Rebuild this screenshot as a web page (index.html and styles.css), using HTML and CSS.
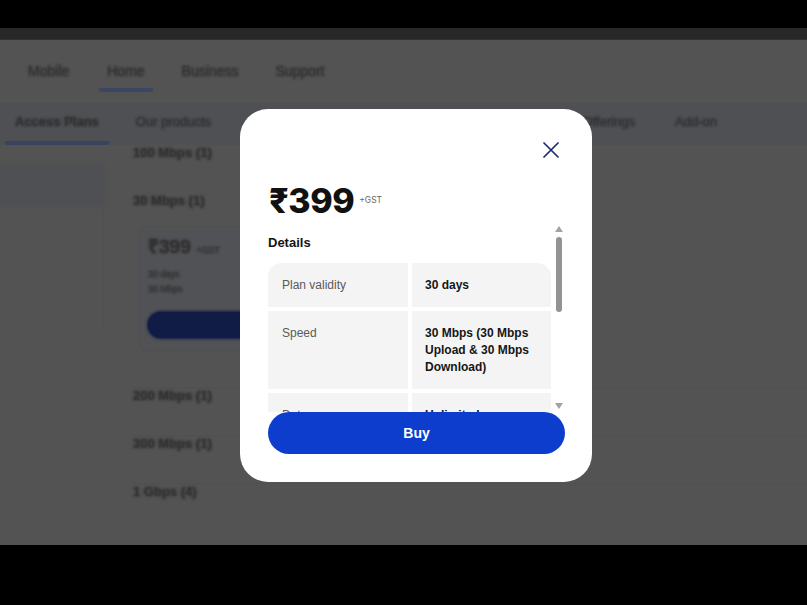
FILE: index.html
```html
<!DOCTYPE html>
<html lang="en">
<head>
<meta charset="utf-8">
<title>Plan details</title>
<link rel="stylesheet" href="styles.css">
</head>
<body>
<div class="device">
  <div class="bar-top"></div>
  <div class="status"></div>
  <div class="screen">
    <div class="page">
      <nav class="nav">
        <span class="nav-item">Mobile</span>
        <span class="nav-item active">Home</span>
        <span class="nav-item">Business</span>
        <span class="nav-item">Support</span>
      </nav>
      <div class="subnav">
        <span class="sub-item active">Access Plans</span>
        <span class="sub-item">Our products</span>
        <span class="sub-spacer"></span>
        <span class="sub-item">Offerings</span>
        <span class="sub-item">Add-on</span>
      </div>
      <div class="content">
        <aside class="sidebar">
          <div class="side-item sel"></div>
          <div class="side-item"></div>
          <div class="side-item"></div>
        </aside>
        <main class="list">
          <div class="group">100 Mbps (1)</div>
          <div class="group">30 Mbps (1)</div>
          <div class="card">
            <div class="card-price">₹399 <small>+GST</small></div>
            <div class="card-line">30 days</div>
            <div class="card-line">30 Mbps</div>
            <div class="card-btn"></div>
          </div>
          <div class="group sep">200 Mbps (1)</div>
          <div class="group sep">300 Mbps (1)</div>
          <div class="group sep">1 Gbps (4)</div>
        </main>
      </div>
    </div>

    <div class="modal">
      <div class="modal-head">
        <button class="close" aria-label="Close">
          <svg width="16" height="16" viewBox="0 0 16 16"><path d="M1 1L15 15M15 1L1 15" stroke="#1c2b6e" stroke-width="1.7" fill="none" stroke-linecap="round"/></svg>
        </button>
      </div>
      <div class="price-row">
        <span class="price">₹399</span>
        <span class="gst">+GST</span>
      </div>
      <div class="scroll">
        <div class="scroll-body">
          <h3 class="details">Details</h3>
          <div class="table">
            <div class="cell label tl">Plan validity</div>
            <div class="cell value tr">30 days</div>
            <div class="cell label">Speed</div>
            <div class="cell value">30 Mbps (30 Mbps Upload &amp; 30 Mbps Download)</div>
            <div class="cell label">Data</div>
            <div class="cell value">Unlimited</div>
          </div>
        </div>
        <div class="scrollbar">
          <span class="arrow up"></span>
          <span class="thumb"></span>
          <span class="fill"></span>
          <span class="arrow down"></span>
        </div>
      </div>
      <button class="buy">Buy</button>
    </div>
  </div>
  <div class="bar-bottom"></div>
</div>
</body>
</html>
```
FILE: styles.css
```css
* { box-sizing: border-box; }
html, body { margin: 0; padding: 0; background: #000; }
body { font-family: "Liberation Sans", Arial, sans-serif; }

.device { width: 807px; height: 605px; display: flex; flex-direction: column; overflow: hidden; }
.bar-top { height: 28px; background: #000; }
.status { height: 12px; background: #282828; border-bottom: 1px solid #303030; }
.screen { height: 505px; background: #535353; position: relative; overflow: hidden; }
.bar-bottom { flex: 1; background: #000; }

/* blurred page behind the overlay */
.page { height: 100%; font-size: 14px; line-height: 16px; }
.page span, .page .group, .card-price, .card-line {
  color: transparent;
  text-shadow: 0 0 3px rgba(48, 48, 48, 0.95), 0 0 2px rgba(48, 48, 48, 0.7);
}
.nav { height: 63px; display: flex; align-items: flex-start; padding: 23px 0 0 28px; }
.nav-item { margin-right: 37px; }
.nav-item:first-child { margin-right: 30px; }
.nav-item.active { padding: 0 8px 9px; margin-right: 29px; border-bottom: 4px solid #3c4662; border-radius: 2px; }
.subnav { height: 42px; background: #4e5054; display: flex; align-items: flex-start; padding: 11px 0 0 5px; font-size: 13px; }
.sub-item { margin-right: 27px; }
.sub-item.active { font-weight: bold; padding: 0 10px 11px; border-bottom: 4px solid #39425f; border-radius: 2px; }
.sub-spacer { flex: 1; }
.sub-item:nth-child(4) { margin-right: 40px; }
.sub-item:last-child { margin-right: 90px; }
.content { display: flex; }
.sidebar { width: 104px; margin-top: 20px; border-right: 1px solid #505050; height: 162px; }
.side-item { height: 40px; }
.side-item.sel { background: #4f5054; box-shadow: 0 0 3px 1px #4f5054; }
.list { padding-left: 29px; flex: 1; }
.page .group { font-weight: bold; font-size: 13px; height: 48px; }
.card { width: 260px; margin: -15px 0 37px 6px; height: 125px; border: 1px solid #4f4f4f; border-radius: 8px; background: #515255; padding: 8px 8px 0 8px; box-shadow: 0 0 3px #515255; }
.card-price { font-size: 19px; line-height: 24px; font-weight: bold; }
.card-price small { font-size: 9px; font-weight: normal; }
.card-line { font-size: 9px; line-height: 13px; margin-top: 2px; }
.card-line:nth-of-type(2) { margin-top: 6px; }
.card-btn { height: 26px; border-radius: 13px; background: #101c46; margin-top: 16px; box-shadow: 0 0 3px 1px #101c46; }
.page .group.sep { height: 49px; margin-top: -1px; border-top: 1px solid #505050; padding-top: 0; }
.page .group.sep:nth-of-type(3) { border-top: 0; }

/* modal */
.modal {
  position: absolute; left: 240px; top: 69px; width: 352px; height: 373px;
  background: #fff; border-radius: 28px;
  padding: 33px 27px 28px 28px;
  display: flex; flex-direction: column;
}
.modal-head { height: 16px; display: flex; justify-content: flex-end; padding-right: 6px; }
.close { border: 0; background: none; padding: 0; width: 16px; height: 16px; display: block; cursor: pointer; }
.close svg { display: block; }
.price-row { margin-top: 25px; height: 36px; display: flex; align-items: flex-start; }
.price { font-family: Inter, "Noto Sans", sans-serif; font-weight: 800; font-size: 34px; line-height: 36px; color: #111; letter-spacing: -0.5px; margin-left: 1px; }
.gst { font-family: Inter, "Noto Sans", sans-serif; font-size: 8.5px; color: #666; margin: 12px 0 0 5px; }
.scroll { margin-top: 3px; height: 190px; display: flex; overflow: hidden; }
.scroll-body { width: 283px; padding-top: 13px; }
.details { margin: 0; font-size: 13px; line-height: 16px; font-weight: bold; color: #141414; }
.table { margin-top: 12px; display: grid; grid-template-columns: 140px 139px; gap: 4px; }
.cell { background: #f4f4f4; padding: 14px 12px 13px 14px; font-size: 12px; line-height: 17px; }
.label { color: #5a5a5a; }
.value { color: #161616; font-weight: bold; padding-left: 13px; }
.tl { border-top-left-radius: 14px; }
.tr { border-top-right-radius: 14px; }
.scrollbar { width: 12px; margin-left: 2px; display: flex; flex-direction: column; align-items: center; padding: 4px 0 3px; }
.arrow { width: 0; height: 0; border-left: 4px solid transparent; border-right: 4px solid transparent; }
.arrow.up { border-bottom: 6px solid #a3a3a3; }
.arrow.down { border-top: 6px solid #a3a3a3; }
.thumb { width: 6px; height: 75px; border-radius: 3px; background: #939393; margin-top: 5px; }
.fill { flex: 1; }
.buy {
  height: 42px; width: 297px; border: 0; border-radius: 21px;
  background: #0c3dcd; color: #fff; font-family: "Liberation Sans", Arial, sans-serif;
  font-weight: bold; font-size: 14px; cursor: pointer;
}
```
